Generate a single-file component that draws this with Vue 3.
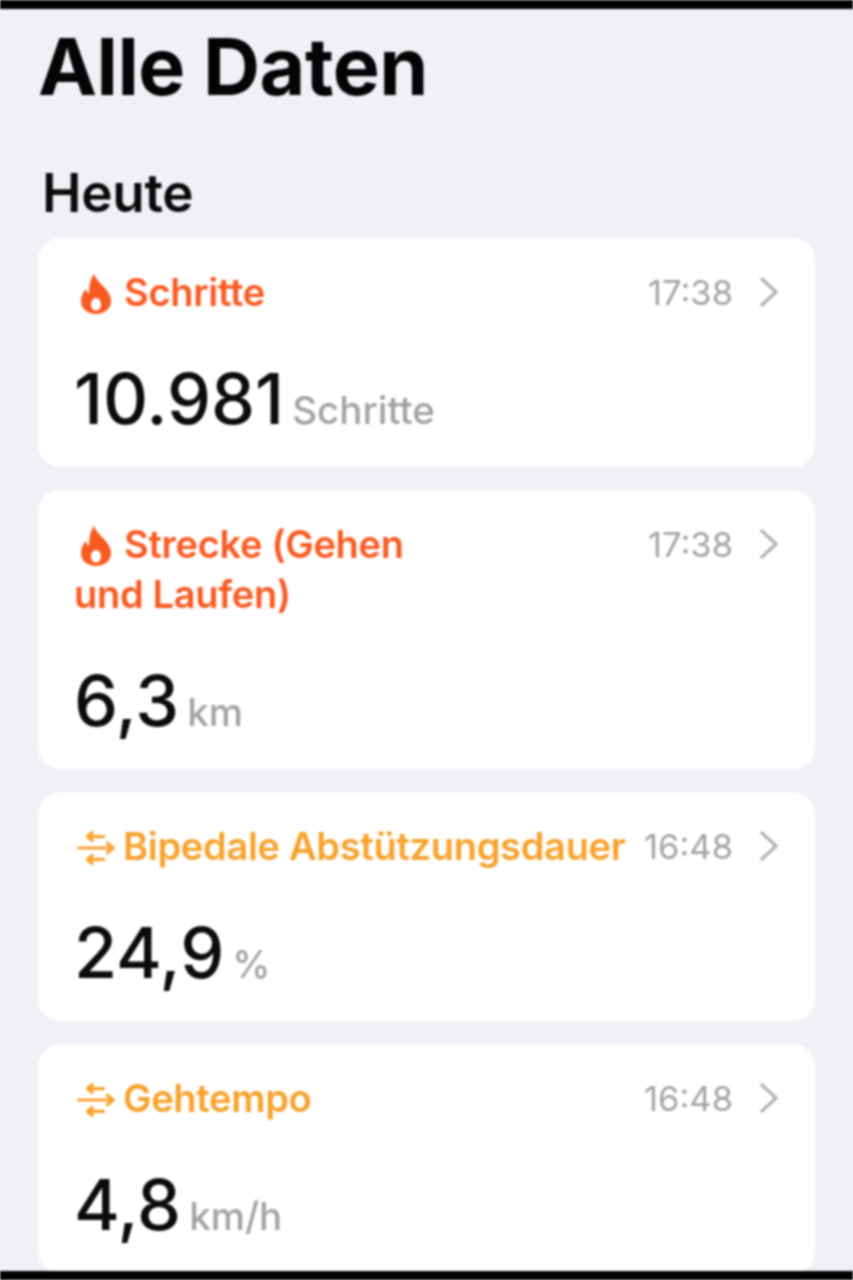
<template>
  <div class="screen">
    <div class="bar"></div>
    <main class="content">
      <h1 class="title">Alle Daten</h1>
      <h2 class="section">Heute</h2>
      <section class="list">
        <article v-for="item in items" :key="item.label" class="card">
          <header class="card-head">
            <div class="label" :class="[item.kind, { narrow: item.narrow }]">
              <svg v-if="item.kind === 'flame'" class="icon" viewBox="0 0 32 42">
                <path
                  fill="currentColor"
                  fill-rule="evenodd"
                  d="M14 1c2 5 5 8 9 12 5 5 8 10 8 15 0 8-7 13-15 13S1 36 1 28c0-5 2-9 5-12 .5 2.500 1.500 4 3 5C9 14 10 6 14 1Zm2 24c-3 0-5 3-5 6.500s2 6 5 6 5-2.500 5-6-2-6.500-5-6.500Z"
                />
              </svg>
              <svg v-else class="icon" viewBox="0 0 40 38">
                <g fill="none" stroke="currentColor" stroke-width="3.400" stroke-linecap="round" stroke-linejoin="round">
                  <path d="M28 7H11M16 3l-5 4 5 4" />
                  <path d="M2 19h36M32 14l6 5-6 5" />
                  <path d="M28 31H11M16 27l-5 4 5 4" />
                </g>
              </svg>
              <span>{{ item.label }}</span>
            </div>
            <div class="meta">
              <span class="time">{{ item.time }}</span>
              <svg class="chevron" viewBox="0 0 20 30">
                <path d="M3 2l14 13L3 28" fill="none" stroke="currentColor" stroke-width="3.400" stroke-linecap="round" stroke-linejoin="round" />
              </svg>
            </div>
          </header>
          <div class="reading">
            <span class="value">{{ item.value }}</span>
            <span class="unit">{{ item.unit }}</span>
          </div>
        </article>
      </section>
    </main>
    <div class="bar"></div>
  </div>
</template>

<script setup>
const items = [
  { kind: 'flame', label: 'Schritte', time: '17:38', value: '10.981', unit: 'Schritte' },
  { kind: 'flame', label: 'Strecke (Gehen und Laufen)', time: '17:38', value: '6,3', unit: 'km', narrow: true },
  { kind: 'arrows', label: 'Bipedale Abstützungsdauer', time: '16:48', value: '24,9', unit: '%' },
  { kind: 'arrows', label: 'Gehtempo', time: '16:48', value: '4,8', unit: 'km/h' }
]
</script>

<style>
html,
body {
  margin: 0;
  background: #f0f0f6;
}
</style>

<style scoped>
.screen {
  width: 853px;
  height: 1280px;
  display: flex;
  flex-direction: column;
  overflow: hidden;
  background: #f0f0f6;
  font-family: Inter, "Liberation Sans", sans-serif;
  filter: blur(0.9px);
}
.bar {
  flex: 0 0 9px;
  background: #000;
}
.content {
  flex: 1;
  min-height: 0;
  overflow: hidden;
  padding: 0 38px;
}
.title {
  margin: 15px 0 0;
  font-size: 79px;
  line-height: 84px;
  font-weight: 700;
  letter-spacing: -0.5px;
  color: #050505;
}
.section {
  margin: 58px 0 0 4px;
  font-size: 53px;
  line-height: 54px;
  font-weight: 600;
  letter-spacing: -0.3px;
  color: #0a0a0a;
}
.list {
  margin-top: 18px;
  display: flex;
  flex-direction: column;
  gap: 23px;
}
.card {
  background: #fff;
  border-radius: 22px;
  padding: 29px 36px 29px;
}
.card-head {
  display: flex;
  justify-content: space-between;
  align-items: flex-start;
}
.label {
  font-size: 38px;
  line-height: 50px;
  font-weight: 600;
  letter-spacing: -0.3px;
  max-width: 560px;
}
.label.narrow {
  max-width: 350px;
}
.flame {
  color: #f95a22;
}
.arrows {
  color: #f8a22c;
}
.icon {
  height: 40px;
  width: 38px;
  margin: 0 8px 0 3px;
  vertical-align: -8px;
}
.flame .icon {
  width: 32px;
  height: 42px;
  margin: 0 12px 0 6px;
  vertical-align: -9px;
}
.meta {
  display: flex;
  align-items: center;
  gap: 26px;
  height: 50px;
}
.time {
  font-size: 34.5px;
  font-weight: 400;
  color: #a4a4a8;
}
.chevron {
  width: 20px;
  height: 30px;
  color: #b4b4b8;
}
.reading {
  margin-top: 43px;
  display: flex;
  align-items: baseline;
  gap: 8px;
}
.value {
  font-size: 70px;
  line-height: 78px;
  font-weight: 500;
  color: #0c0c0c;
}
.unit {
  font-size: 38.5px;
  font-weight: 500;
  color: #a2a2a6;
}
</style>
